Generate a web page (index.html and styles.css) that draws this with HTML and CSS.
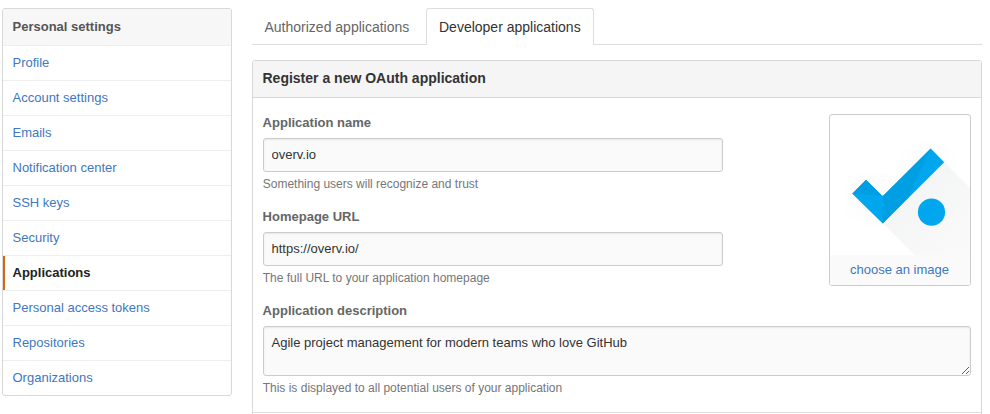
FILE: index.html
```html
<!DOCTYPE html>
<html lang="en">
<head>
<meta charset="utf-8">
<title>Developer applications</title>
<link rel="stylesheet" href="styles.css">
</head>
<body>
<div class="page">
  <nav class="menu">
    <h3 class="menu-heading">Personal settings</h3>
    <a class="menu-item">Profile</a>
    <a class="menu-item">Account settings</a>
    <a class="menu-item">Emails</a>
    <a class="menu-item">Notification center</a>
    <a class="menu-item">SSH keys</a>
    <a class="menu-item">Security</a>
    <a class="menu-item selected">Applications</a>
    <a class="menu-item">Personal access tokens</a>
    <a class="menu-item">Repositories</a>
    <a class="menu-item">Organizations</a>
  </nav>
  <main class="content">
    <div class="tabs">
      <a class="tab">Authorized applications</a>
      <a class="tab selected">Developer applications</a>
    </div>
    <section class="box">
      <h3 class="box-title">Register a new OAuth application</h3>
      <form class="box-body">
        <div class="top-row">
          <div class="fields">
            <div class="group">
              <label class="label" for="name">Application name</label>
              <input class="control" id="name" type="text" value="overv.io">
              <p class="note">Something users will recognize and trust</p>
            </div>
            <div class="group">
              <label class="label" for="url">Homepage URL</label>
              <input class="control" id="url" type="text" value="https://overv.io/">
              <p class="note">The full URL to your application homepage</p>
            </div>
          </div>
          <div class="logo-picker">
            <svg class="logo" viewBox="0 0 140 140" width="140" height="140">
              <defs>
                <linearGradient id="cast" gradientUnits="userSpaceOnUse" x1="83" y1="78" x2="128" y2="123">
                  <stop offset="0" stop-color="#f4f5f5"/>
                  <stop offset="1" stop-color="#f9f9f9"/>
                </linearGradient>
                <radialGradient id="halo">
                  <stop offset="0" stop-color="#000" stop-opacity=".02"/>
                  <stop offset="1" stop-color="#000" stop-opacity="0"/>
                </radialGradient>
              </defs>
              <ellipse cx="44" cy="84" rx="36" ry="32" fill="url(#halo)"/>
              <ellipse cx="98" cy="52" rx="34" ry="30" fill="url(#halo)"/>
              <path d="M114 47L140 73V140H84.4L52.7 108.3Z" fill="url(#cast)"/>
              <path d="M22.3 78.8L36 65.1L52.7 81.3L100.7 33.6L114.2 47.2L52.7 108.5Z" fill="#00a6ee"/>
              <path d="M22.3 78.8L36 65.1L52.7 81.3V80.2Z" fill="#009fe3"/>
              <path d="M22.3 78.8L36 65.1L50 79Z" fill="#009fe3"/>
              <path d="M52.7 81.3L100.7 33.6L78 83L52.7 108.5Z" fill="#009fe3"/>
              <circle cx="101.5" cy="97.2" r="13.6" fill="#00a6ee"/>
            </svg>
            <a class="choose">choose an image</a>
          </div>
        </div>
        <div class="group">
          <label class="label" for="desc">Application description</label>
          <textarea class="control area" id="desc">Agile project management for modern teams who love GitHub</textarea>
          <p class="note">This is displayed to all potential users of your application</p>
        </div>
      </form>
      <div class="box-next"></div>
    </section>
  </main>
</div>
</body>
</html>
```
FILE: styles.css
```css
* { box-sizing: border-box; }
body {
  margin: 0;
  height: 414px;
  overflow: hidden;
  background: #fff;
  color: #333;
  font: 13px/18px "Liberation Sans", Arial, sans-serif;
}
h3, p { margin: 0; }
.page {
  display: flex;
  align-items: flex-start;
  gap: 20px;
  padding: 8px 8px 0 2px;
}
.menu {
  width: 230px;
  border: 1px solid #d8d8d8;
  border-radius: 3px;
  overflow: hidden;
}
.menu-heading {
  height: 37px;
  padding: 9px 9.5px;
  border-bottom: 1px solid #eee;
  background: #f7f7f7;
  color: #555;
  font-size: 13px;
  line-height: 18px;
}
.menu-item {
  display: block;
  height: 35px;
  padding: 8px 9.5px;
  border-bottom: 1px solid #eee;
  color: #4078c0;
}
.menu-item:last-child { height: 34px; border-bottom: 0; }
.menu-item.selected {
  color: #222;
  font-weight: bold;
  background: linear-gradient(#d26911, #d26911) no-repeat 0 0 / 2px 100%;
}
.content { width: 730px; }
.tabs {
  display: flex;
  height: 37px;
  margin-bottom: 15px;
  border-bottom: 1px solid #ddd;
}
.tab {
  width: 174px;
  height: 37px;
  padding: 8px 0 8px 11.5px;
  border: 1px solid transparent;
  border-bottom: 0;
  color: #666;
  font-size: 14px;
  line-height: 20px;
  white-space: nowrap;
}
.tab.selected {
  width: 168px;
  padding-left: 12px;
  border-color: #ddd;
  border-radius: 3px 3px 0 0;
  background: #fff;
  color: #333;
}
.box {
  border: 1px solid #d8d8d8;
  border-radius: 3px 3px 0 0;
}
.box-title {
  height: 37px;
  padding: 8px 9.5px;
  border-bottom: 1px solid #d8d8d8;
  border-radius: 2px 2px 0 0;
  background: #f5f5f5;
  font-size: 14px;
  line-height: 18px;
}
.box-body { padding: 16px 10px 0; height: 314px; }
.top-row { display: flex; justify-content: space-between; height: 188px; }
.fields { width: 460px; }
.group { height: 94px; }
.label {
  display: block;
  height: 24px;
  color: #666;
  font-weight: bold;
  text-indent: -0.4px;
}
.control {
  display: block;
  width: 100%;
  height: 34px;
  margin: 0;
  padding: 6px 7.5px 8px;
  border: 1px solid #ccc;
  border-radius: 3px;
  background: #fafafa;
  box-shadow: inset 0 1px 2px rgba(0, 0, 0, .075);
  color: #333;
  font: inherit;
}
.area { height: 50px; padding-top: 7px; resize: vertical; }
.note { padding-top: 3px; color: #767676; font-size: 12px; line-height: 18px; text-indent: -0.3px; }
.logo-picker {
  width: 142px;
  height: 172px;
  border: 1px solid #ccc;
  border-radius: 3px;
  overflow: hidden;
}
.logo { display: block; }
.choose {
  display: block;
  height: 30px;
  padding-right: 1px;
  background: #fafafa;
  color: #4078c0;
  line-height: 30px;
  text-align: center;
}
.box-next { height: 20px; border-top: 1px solid #ddd; }
```
